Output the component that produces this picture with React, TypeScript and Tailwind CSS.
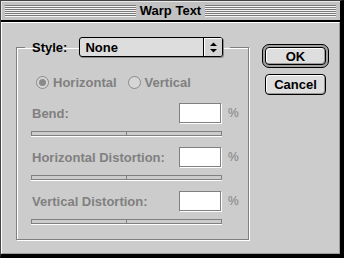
import React from "react";

function Stripes() {
  return (
    <div className="flex-1 h-[12px] bg-[repeating-linear-gradient(to_bottom,#7a7a7a_0px,#7a7a7a_1px,#f4f4f4_1px,#f4f4f4_2px)]" />
  );
}

function Radio({ label, checked }: { label: string; checked?: boolean }) {
  return (
    <div className="flex items-center gap-[4px]">
      <span className="w-[13px] h-[13px] rounded-full border border-[#8a8a8a] bg-[#d6d6d6] flex items-center justify-center">
        {checked && <span className="w-[7px] h-[7px] rounded-full bg-[#8a8a8a]" />}
      </span>
      <span>{label}</span>
    </div>
  );
}

function SliderRow({ label, first }: { label: string; first?: boolean }) {
  return (
    <div className={first ? "mt-[14px]" : "mt-[11px]"}>
      <div className="flex items-center h-[20px] w-[208px]">
        <span className="flex-1 pl-[1px]">{label}</span>
        <div className="w-[42px] h-[20px] border border-[#808080] bg-white shadow-[1px_1px_0_#fff]" />
        <span className="w-[18px] pl-[7px] font-normal text-[12px]">%</span>
      </div>
      <div className="mt-[8px] w-[191px] h-[5px] border border-[#808080] bg-[#cccccc] shadow-[0_1px_0_#fff] flex justify-center">
        <div className="w-px h-full bg-[#808080]" />
      </div>
    </div>
  );
}

export default function App() {
  return (
    <div className="w-[344px] h-[258px] flex flex-col bg-[#cccccc] border-l border-t border-[#444444] border-r-4 border-b-4 border-r-black border-b-black font-['Liberation_Sans',Arial,sans-serif] font-bold text-[13px] leading-none select-none">
      {/* title bar */}
      <div className="h-[21px] flex items-center px-[4px] bg-[#c2c2c2] border-b-2 border-black shadow-[inset_1px_1px_0_#e8e8e8]">
        <Stripes />
        <span className="px-[4px] text-black">Warp Text</span>
        <Stripes />
      </div>

      {/* body */}
      <div className="flex-1 flex items-start pl-[14px] pt-[14px] border-l border-t border-white border-r border-b border-r-[#9a9a9a] border-b-[#9a9a9a]">
        <fieldset className="w-[233px] border border-[#808080] shadow-[inset_1px_1px_0_#fff,1px_1px_0_#fff] pb-[15px] text-[#808080]">
          <legend className="ml-[8px] px-[7px]">
            <div className="flex items-center gap-[12px] text-black">
              <span>Style:</span>
              <div className="w-[144px] h-[20px] rounded-[3px] border border-black bg-[#dddddd] shadow-[1px_1px_0_#8a8a8a] flex items-center overflow-hidden">
                <span className="flex-1 pl-[5px]">None</span>
                <div className="w-[19px] h-full border-l border-black bg-[#d4d4d4] shadow-[inset_1px_1px_0_#fff] flex items-center justify-center">
                  <svg width="7" height="11" viewBox="0 0 7 11">
                    <path d="M3.5 0.5 L7 4 L0 4 Z" fill="#000" />
                    <path d="M0 7 L7 7 L3.5 10.5 Z" fill="#000" />
                  </svg>
                </div>
              </div>
            </div>
          </legend>

          <div className="pl-[14px]">
            <div className="mt-[19px] ml-[5px] h-[13px] flex items-center gap-[11px]">
              <Radio label="Horizontal" checked />
              <Radio label="Vertical" />
            </div>

            <SliderRow label="Bend:" first />
            <SliderRow label="Horizontal Distortion:" />
            <SliderRow label="Vertical Distortion:" />
          </div>
        </fieldset>

        <div className="ml-[13px] mt-[7px] flex flex-col items-center gap-[6px]">
          <div className="w-[67px] h-[24px] rounded-[7px] border border-black bg-[#a0a0a0] p-[2px]">
            <div className="w-full h-full rounded-[4px] border border-black bg-[#dedede] shadow-[inset_1px_1px_0_#fff,inset_-1px_-1px_0_#9a9a9a] flex items-center justify-center text-black">
              OK
            </div>
          </div>
          <div className="w-[61px] h-[21px] rounded-[4px] border border-black bg-[#dedede] shadow-[inset_1px_1px_0_#fff,inset_-1px_-1px_0_#9a9a9a] flex items-center justify-center text-black">
            Cancel
          </div>
        </div>
      </div>
    </div>
  );
}
